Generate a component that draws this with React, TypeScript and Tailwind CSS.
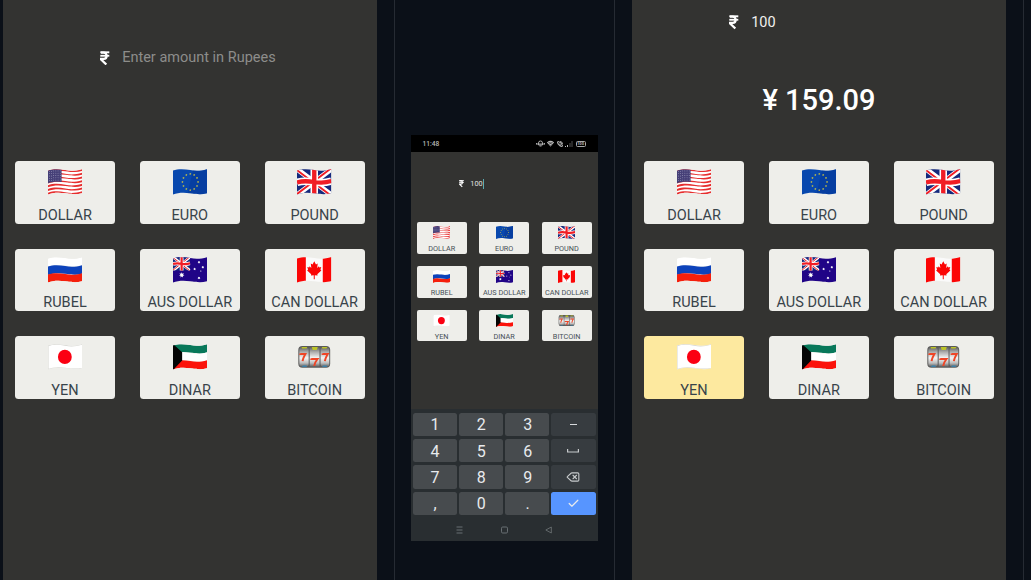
import React from "react";
import { Wifi, PhoneCall, Delete, Check } from "lucide-react";

type Code = "us" | "eu" | "gb" | "ru" | "au" | "ca" | "jp" | "kw" | "slot";

const currencies: { code: Code; label: string }[] = [
  { code: "us", label: "DOLLAR" },
  { code: "eu", label: "EURO" },
  { code: "gb", label: "POUND" },
  { code: "ru", label: "RUBEL" },
  { code: "au", label: "AUS DOLLAR" },
  { code: "ca", label: "CAN DOLLAR" },
  { code: "jp", label: "YEN" },
  { code: "kw", label: "DINAR" },
  { code: "slot", label: "BITCOIN" },
];

// A horizontal band of waving cloth between two heights of a 34x26 flag.
function band(top: number, bottom: number) {
  return `M0 ${top + 1.6}C5 ${top - 0.4} 11 ${top - 0.1} 17 ${top + 1.1}S28 ${top + 1.9} 34 ${top}V${bottom}C28 ${bottom + 1.9} 23 ${bottom + 1} 17 ${bottom + 0.2}S5 ${bottom - 0.6} 0 ${bottom + 1.5}Z`;
}

function star(cx: number, cy: number, r: number, n = 5) {
  const pts: string[] = [];
  for (let i = 0; i < n * 2; i++) {
    const a = (Math.PI * i) / n - Math.PI / 2;
    const k = i % 2 ? r * 0.5 : r;
    pts.push(`${(cx + k * Math.cos(a)).toFixed(2)},${(cy + k * Math.sin(a)).toFixed(2)}`);
  }
  return pts.join(" ");
}

function RupeeIcon({ className }: { className: string }) {
  return (
    <svg viewBox="0 0 10 15" className={className} fill="none" stroke="currentColor">
      <path d="M.3 1.3H9.7" strokeWidth="2" />
      <path d="M.3 4.9H9.7" strokeWidth="1.9" />
      <path d="M1 1.6H4C7.8 1.6 7.8 8.2 4 8.2H1.2V8.8L6.6 14" strokeWidth="2.4" />
    </svg>
  );
}

function UnionJack() {
  return (
    <>
      <rect width="34" height="27" y="-.5" fill="#15297c" />
      <path d="M0 0L34 26M34 0L0 26" stroke="#fff" strokeWidth="5" />
      <path d="M-1 .4L16 13.4M34 -1L17 12M0 25L17 12M34 27L17 14" stroke="#f01d25" strokeWidth="1.9" />
      <path d="M17 -1V27M0 13.4C6 11.5 11 12 17 13S28 14 34 12" stroke="#fff" strokeWidth="7.4" fill="none" />
      <path d="M17 -1V27M0 13.4C6 11.5 11 12 17 13S28 14 34 12" stroke="#f01d25" strokeWidth="4.3" fill="none" />
    </>
  );
}

function FlagArt({ code }: { code: Code }) {
  switch (code) {
    case "us":
      return (
        <>
          <rect width="34" height="26" fill="#fff" />
          {[0, 2, 4, 6, 8, 10, 12].map((i) => (
            <path key={i} d={band(i * 1.85 - 0.1, (i + 1) * 1.85 + 0.1)} fill="#e62f2f" />
          ))}
          <path d="M0 1.6C4 0 8 -.1 13.4 .6V13C8 12.3 4 12.6 0 14.2Z" fill="#464078" />
          {[0, 1, 2, 3, 4].map((r) =>
            [0, 1, 2, 3, 4, 5].map((c) => (
              <circle key={`${r}-${c}`} cx={1.3 + c * 2.15} cy={2.4 + r * 2.3 - (c > 1 ? 0.5 : 0)} r=".4" fill="#c9c8df" />
            ))
          )}
        </>
      );
    case "eu":
      return (
        <>
          <rect width="34" height="26" fill="#0848ae" />
          <path d="M20 0H34V26H14Z" fill="#063797" opacity=".55" />
          {Array.from({ length: 12 }, (_, i) => (
            <polygon
              key={i}
              points={star(17 + 7.7 * Math.cos((i * Math.PI) / 6), 13 + 8.1 * Math.sin((i * Math.PI) / 6), 1.15)}
              fill="#d8cb3a"
            />
          ))}
        </>
      );
    case "gb":
      return <UnionJack />;
    case "ru":
      return (
        <>
          <path d={band(0, 8.2)} fill="#fff" />
          <path d={band(8, 16.5)} fill="#0d43bb" />
          <path d={band(16, 24)} fill="#f51f0c" />
        </>
      );
    case "au":
      return (
        <>
          <rect width="34" height="26" fill="#200487" />
          <svg x="0" y="0" width="17" height="13.6" viewBox="0 0 34 26" preserveAspectRatio="none">
            <UnionJack />
          </svg>
          <g fill="#fff">
            <polygon points={star(8.6, 18, 2.8, 7)} />
            <polygon points={star(25.6, 5.2, 1.4, 7)} />
            <polygon points={star(21.3, 12, 1.4, 7)} />
            <polygon points={star(29.4, 10.2, 1.4, 7)} />
            <polygon points={star(25.6, 21, 1.5, 7)} />
            <circle cx="27.4" cy="14" r=".6" />
          </g>
        </>
      );
    case "ca":
      return (
        <>
          <rect width="34" height="26" fill="#fafafa" />
          <path d="M0 0H8.7V26H0ZM25.4 0H34V26H25.4Z" fill="#fb0505" />
          <path
            d="M17 4.2L18.7 7.5L20.4 6.6L19.9 11L21.6 9.2L22 10.4L23.9 10.1L23.1 12.6L24 13.4L20 17.2L20.3 18.6L17.5 18.2V22.2H16.5V18.2L13.7 18.6L14 17.2L10 13.4L10.9 12.6L10.1 10.1L12 10.4L12.4 9.2L14.1 11L13.6 6.6L15.3 7.5Z"
            fill="#fb0505"
          />
        </>
      );
    case "jp":
      return (
        <>
          <rect width="34" height="26" fill="#fff" />
          <ellipse cx="16.6" cy="12.9" rx="6.8" ry="7.2" fill="#fb0012" />
          <path d={band(0.2, 24)} fill="none" stroke="#d5d5d0" strokeWidth="1" />
        </>
      );
    case "kw":
      return (
        <>
          <path d={band(0, 8.3)} fill="#08785a" />
          <path d={band(8, 16.5)} fill="#fff" />
          <path d={band(16, 24)} fill="#fb130b" />
          <path d="M0 0L9 8.2V16.6L0 26Z" fill="#050505" />
        </>
      );
    default:
      return null;
  }
}

function SlotMachine() {
  return (
    <>
      <defs>
        <linearGradient id="reel" x1="0" y1="0" x2="0" y2="1">
          <stop offset="0" stopColor="#555" />
          <stop offset=".25" stopColor="#aaa" />
          <stop offset=".55" stopColor="#f4f4f4" />
          <stop offset=".8" stopColor="#bdbdbd" />
          <stop offset="1" stopColor="#555" />
        </linearGradient>
      </defs>
      <rect x="1.3" y="2" width="31.4" height="21.8" rx="4" fill="#5b5b5b" />
      <rect x="2.3" y="2.7" width="9.2" height="20.4" rx="3" fill="url(#reel)" />
      <rect x="12.5" y="2.7" width="9.7" height="20.4" rx=".5" fill="url(#reel)" />
      <rect x="23.2" y="2.7" width="8.6" height="20.4" rx="3" fill="url(#reel)" />
      <path d="M4.5 3H10L9.5 4.5H5ZM14.5 3H20.5L19.5 6H15.5ZM24.5 3H30L29 4.5H25Z" fill="#bcc426" />
      <path d="M4.5 22.8H10L9 21.5H6ZM24.5 22.8H30L29 21.5H26Z" fill="#3187b9" />
      <path
        d="M3.3 9.4V11M3.3 9.9H8.3C7.3 12 5.8 14 5.5 17.2M14.1 14.5V16M14.1 15H20.2C18.6 17 17.3 19 17 22M25.3 9.4V11M25.3 9.9H30.3C29.3 12 27.8 14 27.5 17.2"
        fill="none"
        stroke="#ef4526"
        strokeWidth="2"
      />
    </>
  );
}

function Emblem({ code, className }: { code: Code; className: string }) {
  const clip = React.useId();
  return (
    <svg viewBox="0 0 34 26" className={className} preserveAspectRatio="none">
      {code === "slot" ? (
        <SlotMachine />
      ) : (
        <>
          <clipPath id={clip}>
            <path d={band(0, 24)} />
          </clipPath>
          <g clipPath={`url(#${clip})`}>
            <FlagArt code={code} />
          </g>
        </>
      )}
    </svg>
  );
}

function CurrencyGrid({ selected }: { selected?: Code }) {
  return (
    <div className="grid grid-cols-[100px_100px_100px] gap-x-[24.8px] gap-y-[25px]">
      {currencies.map(({ code, label }) => (
        <button
          key={code}
          className={`flex h-[62.5px] flex-col items-center rounded-[3.5px] pt-[8px] ${selected === code ? "bg-[#fde99f]" : "bg-[#eeeeea]"}`}
        >
          <Emblem code={code} className="h-[26px] w-[34.5px] shrink-0" />
          <span className="mt-[11.7px] text-[14.5px] leading-[17px] whitespace-nowrap text-[#38434a]">{label}</span>
        </button>
      ))}
    </div>
  );
}

function MiniGrid() {
  return (
    <div className="grid grid-cols-[50px_50px_50px] gap-x-[12.5px] gap-y-[12.3px]">
      {currencies.map(({ code, label }) => (
        <button key={code} className="flex h-[31.5px] flex-col items-center rounded-[2px] bg-[#eeeeea] pt-[4px]">
          <Emblem code={code} className="h-[13.2px] w-[17.2px] shrink-0" />
          <span className="mt-[5px] text-[7.3px] leading-[9px] whitespace-nowrap text-[#465057]">{label}</span>
        </button>
      ))}
    </div>
  );
}

function StatusBar() {
  return (
    <div className="flex h-[17px] items-center justify-between bg-black pr-[12px] pl-[12px] text-[#b8b8b8]">
      <span className="text-[6.6px] leading-[8px] font-medium">11:48</span>
      <div className="flex items-center gap-[2.5px]">
        <svg viewBox="0 0 18 14" className="h-[7px] w-[9px]" fill="none" stroke="currentColor" strokeWidth="1.8">
          <path d="M5 10V6a4 4 0 0 1 8 0v4ZM7 12h4M1 6v3M17 6v3M1 8h16" />
        </svg>
        <Wifi className="size-[7px]" strokeWidth={4} />
        <PhoneCall className="size-[6px]" strokeWidth={4} />
        <svg viewBox="0 0 8 7" className="h-[7px] w-[8px]">
          <path d="M0 6H1V7H0ZM2 5H3V7H2Z" fill="currentColor" />
          <path d="M4.5 3H5.5V7H4.5ZM6.5 1H7.5V7H6.5Z" fill="#505050" />
        </svg>
        <div className="flex h-[6px] w-[10px] items-center justify-center rounded-[1.5px] border border-[#a8a8a8] text-[4px] leading-[4px] font-bold">
          100
        </div>
      </div>
    </div>
  );
}

const keys = ["1", "2", "3", "minus", "4", "5", "6", "space", "7", "8", "9", "delete", ",", "0", ".", "done"];

function Key({ value }: { value: string }) {
  const base = "flex items-center justify-center rounded-[2.5px] text-[16px] leading-[20px] text-[#e8eaed]";
  switch (value) {
    case "minus":
      return (
        <button className={`${base} bg-[#373c40]`}>
          <span className="h-[1.3px] w-[7px] bg-[#d7dadc]" />
        </button>
      );
    case "space":
      return (
        <button className={`${base} bg-[#373c40]`}>
          <svg viewBox="0 0 12 4" className="h-[4px] w-[12px]" fill="none" stroke="#c6c9cb" strokeWidth="1.2">
            <path d="M.6 0V3H11.4V0" />
          </svg>
        </button>
      );
    case "delete":
      return (
        <button className={`${base} bg-[#373c40]`}>
          <Delete className="size-[14px] text-[#c6c9cb]" strokeWidth={1.9} />
        </button>
      );
    case "done":
      return (
        <button className={`${base} bg-[#5795ff]`}>
          <Check className="size-[13px]" strokeWidth={2.2} />
        </button>
      );
    default:
      return <button className={`${base} bg-[#474b4e] pt-[1.6px] pl-[1px]`}>{value}</button>;
  }
}

function Keyboard() {
  return (
    <div className="flex h-[132px] flex-col bg-[#292e31] px-[2px] pt-[3.8px]">
      <div className="grid auto-rows-[23.4px] grid-cols-4 gap-x-[2.3px] gap-y-[2.9px]">
        {keys.map((k) => (
          <Key key={k} value={k} />
        ))}
      </div>
      <div className="mt-[10.5px] flex items-center justify-center gap-[37.5px] text-[#71777a]">
        <svg viewBox="0 0 7 8" className="h-[8px] w-[7px]" stroke="currentColor" strokeWidth=".9">
          <path d="M.5 1H6.5M.5 4H6.5M.5 7H6.5" />
        </svg>
        <svg viewBox="0 0 7 8" className="h-[8px] w-[7px]" fill="none" stroke="currentColor" strokeWidth=".9">
          <rect x=".5" y="1" width="6" height="6" rx="1.2" />
        </svg>
        <svg viewBox="0 0 7 8" className="h-[8px] w-[7px]" fill="none" stroke="currentColor" strokeWidth=".8">
          <path d="M6.3 1L.8 4L6.3 7Z" />
        </svg>
      </div>
    </div>
  );
}

export default function App() {
  return (
    <div className="flex h-[580px] w-[1031px] overflow-hidden bg-[#0b1018] font-['Roboto',sans-serif]">
      <section className="ml-[3px] w-[374px] shrink-0 bg-[#333331] pl-[12px]">
        <div className="flex h-[161.3px] pt-[48px] pl-[85px]">
          <div className="flex h-[20px] items-center">
            <RupeeIcon className="h-[14.5px] w-[9.6px] text-white" />
            <span className="ml-[12.6px] text-[14.5px] leading-[20px] text-[#8d8d8b]">Enter amount in Rupees</span>
          </div>
        </div>
        <CurrencyGrid />
      </section>

      <section className="ml-[17px] flex w-[221px] shrink-0 justify-center border-x border-[#262b33] pt-[135px]">
        <div className="mr-[1px] flex h-[406px] w-[187px] flex-col bg-[#333331]">
          <StatusBar />
          <div className="flex h-[70.3px] items-start pt-[26px] pl-[48.5px]">
            <div className="flex h-[12px] items-center">
              <RupeeIcon className="h-[7.4px] w-[5px] text-white" />
              <span className="ml-[6.3px] text-[7.3px] leading-[10px] text-[#e0e0e0]">100</span>
              <span className="ml-[.6px] h-[10px] w-px bg-[#5aa9b0]" />
            </div>
          </div>
          <div className="flex-1 pl-[6.2px]">
            <MiniGrid />
          </div>
          <Keyboard />
        </div>
      </section>

      <section className="ml-[17px] w-[374px] shrink-0 bg-[#333331] pl-[12px]">
        <div className="flex h-[161.3px] flex-col pt-[12.5px]">
          <div className="flex h-[20px] items-center pl-[85px]">
            <RupeeIcon className="h-[14.5px] w-[9.6px] text-white" />
            <span className="ml-[12.6px] text-[14.5px] leading-[20px] text-[#f0f0ee]">100</span>
          </div>
          <div className="mt-[49px] mr-[12px] text-center text-[29px] leading-[36px] font-medium text-white">¥ 159.09</div>
        </div>
        <CurrencyGrid selected="jp" />
      </section>

      <div className="ml-[17px] w-px shrink-0 bg-[#262b33]" />
    </div>
  );
}
